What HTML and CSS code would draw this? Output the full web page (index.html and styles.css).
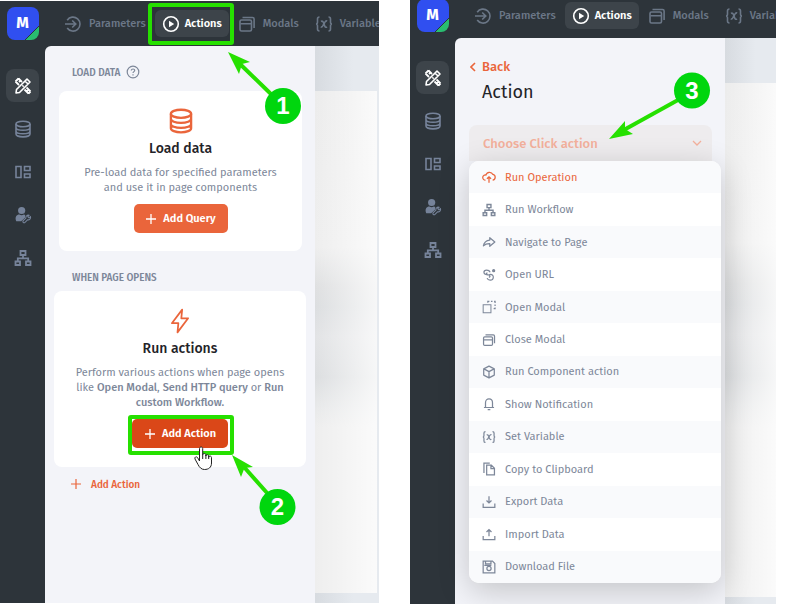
FILE: index.html
```html
<!DOCTYPE html>
<html lang="en">
<head>
<meta charset="utf-8">
<title>Page actions</title>
<link rel="stylesheet" href="styles.css">
</head>
<body>
<svg class="sprite" aria-hidden="true">
  <symbol id="enter" viewBox="0 0 18 18"><path d="M3.2 5.2A7 7 0 1 1 3.2 13M1 9h10.5M8.2 5.5 11.8 9l-3.6 3.5"/></symbol>
  <symbol id="play" viewBox="0 0 18 18"><circle cx="9" cy="9" r="7.3"/><path d="M7 5.8v6.4L12.2 9z" fill="currentColor" stroke="none"/></symbol>
  <symbol id="modals" viewBox="0 0 18 18"><rect x="2" y="5" width="11.5" height="11" rx="1.5"/><path d="M2.5 8.8h11M4.5 2.5h10a1.6 1.6 0 0 1 1.6 1.6v9"/></symbol>
  <symbol id="var" viewBox="0 0 18 18"><path d="M4.5 2Q2.5 2 2.5 4v3Q2.5 9 1 9q1.500 0 1.500 2v3q0 2 2 2M13.500 2q2 0 2 2v3q0 2 1.500 2-1.500 0-1.500 2v3q0 2-2 2M6 6.500q1.500-1 2.300.8l1.500 3.800q.7 1.800 2.200.7M12.200 6q-1.500-.5-2.500 1.500L8 10.500Q7 12.500 5.800 11.800"/></symbol>
  <symbol id="tools" viewBox="0 0 18 18"><g stroke-linejoin="round"><path d="M13 2 16 5 5.500 15.500 2 16l.5-3.500zM11 4l3 3"/><path d="M4.500 1.500 8 5M1.500 4.500 5 8M4.500 1.500l-3 3M10.500 12.500l4 4M12.500 10.500l4 4M14.500 16.500l2-2M6.500 3.500 5 5M14.500 12.500 13 14M8.500 9.500l1-1" stroke-width="1.800"/></g></symbol>
  <symbol id="db" viewBox="0 0 18 18"><ellipse cx="9" cy="4" rx="7" ry="2.800"/><path d="M2 4v10c0 1.600 3.100 2.900 7 2.900s7-1.300 7-2.900V4M2 7.500c0 1.600 3.100 2.800 7 2.800s7-1.200 7-2.800M2 11c0 1.600 3.100 2.800 7 2.800s7-1.200 7-2.800"/></symbol>
  <symbol id="layout" viewBox="0 0 18 18"><path d="M2 3.500h5v11H2zM10.500 3.500H16v4h-5.500zM10.500 11H16v3.500h-5.500z"/></symbol>
  <symbol id="user" viewBox="0 0 20 20"><g fill="currentColor" stroke="none"><circle cx="8.500" cy="5" r="4"/><path d="M2.500 17c-2-4.500.5-7.500 3.500-7.500 1.500 1 3.500 1 5 0l1.500.5-.3 3-4.200 4z"/></g><path d="m10 16.500 3.200-3a2.700 2.700 0 0 1 3.500-3.200l-1.400 1.600 1.300 1.300 1.700-1.400a2.700 2.700 0 0 1-3.300 3.500l-3 3.200c-1.500.5-2.500-.5-2-2z" stroke-width="1.200"/></symbol>
  <symbol id="flow" viewBox="0 0 18 18"><path d="M6.500 2h5v4h-5zM1.500 12.500H6V16H1.500zM12 12.500h4.500V16H12zM9 6v3.300M3.800 12.500V9.300h10.400v3.200" stroke-width="1.800"/></symbol>
  <symbol id="bolt" viewBox="0 0 24 24"><path d="M14 1.500 4.500 14h6l-.8 8.500L19.500 9.500h-6.300z" stroke-linejoin="round"/></symbol>
  <symbol id="plus" viewBox="0 0 12 12"><path d="M6 1v10M1 6h10"/></symbol>
  <symbol id="cloud" viewBox="0 0 18 18"><path d="M4.500 13A3.300 3.300 0 1 1 5 6.500a4.800 4.800 0 0 1 9-.8 3.700 3.700 0 0 1-.3 7.300M9 16.500V9M6.300 11.300 9 8.700l2.700 2.600"/></symbol>
  <symbol id="share" viewBox="0 0 18 18"><path d="M10 3.500 16.500 9 10 14.500v-3.300C6.500 11 4 12 1.800 14c.7-4.200 3.200-7 8.200-7.500z" stroke-linejoin="round"/></symbol>
  <symbol id="link" viewBox="0 0 18 18"><path d="M10.500 5.500C9 1.800 2.500 2 2.500 5.500c0 3.500 4 3 6 3.300 2 .2 2.500 2.700.3 3M7 6.200c-1.800.3-1.500 2 0 2.400M9.500 8.500c3-.8 5.500.8 5 4-.6 4-6.500 4.300-8 .5"/><circle cx="15" cy="3.500" r="1.300" fill="currentColor"/></symbol>
  <symbol id="open" viewBox="0 0 18 18"><path d="M1.500 6h10v10.500h-10z" stroke-width="1.300"/><path d="M7.500 3.500V1.700h2m2 0h2m2 0h1.300v2m0 2v2m0 2v1.300h-1.800"/></symbol>
  <symbol id="cube" viewBox="0 0 18 18"><path d="M9 1.500 15.800 5v8L9 16.500 2.200 13V5zM2.500 5 9 8.500 15.500 5M9 8.500v8" stroke-linejoin="round"/></symbol>
  <symbol id="bell" viewBox="0 0 18 18"><path d="M2.500 13.500h13M4.500 13V7.500C4.500 4.500 6.500 2.500 9 2.500s4.500 2 4.500 5V13M7.300 16.200h3.400"/></symbol>
  <symbol id="copy" viewBox="0 0 18 18"><path d="M6 4h6l4 4v8.500H6zM11.500 4v4.500H16M2.500 14V1.500H10"/></symbol>
  <symbol id="down" viewBox="0 0 18 18"><path d="M1.500 11v4.800h15V11M9 1.500V10M5.800 7 9 10.200 12.200 7"/></symbol>
  <symbol id="up" viewBox="0 0 18 18"><path d="M1.500 11.500v4.800h15v-4.800M9 12V3.500M5.800 6.500 9 3.300l3.200 3.200"/></symbol>
  <symbol id="disk" viewBox="0 0 18 18"><path d="M1.500 1.500h12l3 3v12h-15zM4.500 2v3h7V2M3 7h9"/><circle cx="9" cy="11" r="2.700"/></symbol>
</svg>

<main class="board">
  <section class="screen screen-first">
    <aside class="rail">
      <div class="logo">M</div>
      <button class="tool active" aria-label="Builder"><svg><use href="#tools"/></svg></button>
      <button class="tool" aria-label="Data"><svg><use href="#db"/></svg></button>
      <button class="tool" aria-label="Layouts"><svg><use href="#layout"/></svg></button>
      <button class="tool" aria-label="Users"><svg><use href="#user"/></svg></button>
      <button class="tool" aria-label="Workflows"><svg><use href="#flow"/></svg></button>
    </aside>
    <div class="content">
      <nav class="tabs">
        <button class="tab"><svg><use href="#enter"/></svg>Parameters</button>
        <button class="tab active"><svg><use href="#play"/></svg>Actions</button>
        <button class="tab"><svg><use href="#modals"/></svg>Modals</button>
        <button class="tab"><svg><use href="#var"/></svg>Variables</button>
      </nav>
      <div class="work">
        <div class="panel sections">
          <h2 class="label">LOAD DATA <svg class="help" viewBox="0 0 14 14"><circle cx="7" cy="7" r="5.800"/><path d="M5.300 5.600C5.300 3.400 8.800 3.500 8.700 5.500 8.700 6.600 7 6.700 7 8M7 9.300v1.100"/></svg></h2>
          <article class="card">
            <svg class="hero"><use href="#db"/></svg>
            <h3>Load data</h3>
            <p>Pre-load data for specified parameters<br>and use it in page components</p>
            <button class="primary"><svg><use href="#plus"/></svg>Add Query</button>
          </article>
          <h2 class="label">WHEN PAGE OPENS</h2>
          <article class="card wide">
            <svg class="hero"><use href="#bolt"/></svg>
            <h3>Run actions</h3>
            <p>Perform various actions when page opens<br>like <b>Open Modal</b>, <b>Send HTTP query</b> or <b>Run<br>custom Workflow.</b></p>
            <button class="primary pressed"><svg><use href="#plus"/></svg>Add Action</button>
          </article>
          <button class="add"><svg><use href="#plus"/></svg>Add Action</button>
        </div>
        <div class="canvas"><div class="sheet"></div></div>
      </div>
    </div>
    <svg class="marks" viewBox="0 0 379 602" width="379" height="602">
      <g class="frame"><rect x="150" y="4" width="82" height="38" rx="1"/><rect x="130" y="416" width="102" height="36" rx="1"/></g>
      <path class="shaft" d="M272 94 240 63M268 493 244 466"/>
      <path class="head" d="M228 51 250 61 242 63 239 73zM232 454 253 466 244.500 467 241 476z"/>
      <circle cx="283" cy="105" r="18"/><text x="283" y="113">1</text>
      <circle cx="277.500" cy="506" r="18"/><text x="277.500" y="514">2</text>
      <path class="hand" d="M199.500 460v-12.500c0-2 3.200-2 3.200 0v6.500c0-2 3.200-2 3.200 0v1c0-1.800 2.800-1.800 2.800.2v1c0-1.600 2.800-1.600 2.800.4v5.400c0 4.500-3 6.500-7 6.500-3 0-5-2-6.500-5l-3-5.500c-.8-2 1.500-2.800 2.500-1.500z"/>
      <path class="fingers" d="M202.700 454v4M205.900 454v4M208.700 455v3"/>
    </svg>
  </section>

  <section class="screen screen-second">
    <aside class="rail">
      <div class="logo">M</div>
      <button class="tool active" aria-label="Builder"><svg><use href="#tools"/></svg></button>
      <button class="tool" aria-label="Data"><svg><use href="#db"/></svg></button>
      <button class="tool" aria-label="Layouts"><svg><use href="#layout"/></svg></button>
      <button class="tool" aria-label="Users"><svg><use href="#user"/></svg></button>
      <button class="tool" aria-label="Workflows"><svg><use href="#flow"/></svg></button>
    </aside>
    <div class="content">
      <nav class="tabs">
        <button class="tab"><svg><use href="#enter"/></svg>Parameters</button>
        <button class="tab active"><svg><use href="#play"/></svg>Actions</button>
        <button class="tab"><svg><use href="#modals"/></svg>Modals</button>
        <button class="tab"><svg><use href="#var"/></svg>Variables</button>
      </nav>
      <div class="work">
        <div class="panel action">
          <a class="back" href="#"><svg viewBox="0 0 6 10"><path d="M5 1 1 5l4 4"/></svg>Back</a>
          <h1>Action</h1>
          <div class="picker">
            <select aria-label="Click action"><option>Choose Click action</option></select>
            <svg class="caret" viewBox="0 0 10 6"><path d="m1 1 4 4 4-4"/></svg>
            <div class="menu">
              <button class="current"><svg><use href="#cloud"/></svg>Run Operation</button>
              <button><svg><use href="#flow"/></svg>Run Workflow</button>
              <button><svg><use href="#share"/></svg>Navigate to Page</button>
              <button><svg><use href="#link"/></svg>Open URL</button>
              <button><svg><use href="#open"/></svg>Open Modal</button>
              <button><svg><use href="#modals"/></svg>Close Modal</button>
              <button><svg><use href="#cube"/></svg>Run Component action</button>
              <button><svg><use href="#bell"/></svg>Show Notification</button>
              <button><svg><use href="#var"/></svg>Set Variable</button>
              <button><svg><use href="#copy"/></svg>Copy to Clipboard</button>
              <button><svg><use href="#down"/></svg>Export Data</button>
              <button><svg><use href="#up"/></svg>Import Data</button>
              <button><svg><use href="#disk"/></svg>Download File</button>
            </div>
          </div>
        </div>
        <div class="canvas"><div class="sheet"></div></div>
      </div>
    </div>
    <svg class="marks" viewBox="0 0 366 604" width="366" height="604">
      <path class="shaft" d="M268 100 212 131"/>
      <path class="head" d="M199 139 215 121 215 129 223 134z"/>
      <circle cx="282" cy="90.500" r="18"/><text x="282" y="99">3</text>
    </svg>
  </section>
</main>
</body>
</html>
```
FILE: styles.css
```css
* { box-sizing: border-box; }
body {
  margin: 0;
  background: #fff;
  font: 11px/15px "Fira Sans", Roboto, "Noto Sans", sans-serif;
  color: #7d8799;
}
button, select { font: inherit; color: inherit; border: 0; background: none; padding: 0; margin: 0; }
h1, h2, h3, p { margin: 0; }
svg { fill: none; stroke: currentColor; stroke-width: 1.6; flex: none; }
.sprite { position: absolute; width: 0; height: 0; }

.board { display: grid; grid-template-columns: 379fr 366fr; gap: 31px; padding-right: 9px; align-items: start; }
.screen { position: relative; display: flex; overflow: hidden; background: #2d343a; min-width: 0; }
.screen-first { margin-top: 1px; }
.content { flex: 1; min-width: 0; display: flex; flex-direction: column; }
.screen-second .rail, .screen-second .content { margin-top: -7px; }

.rail { width: 45px; flex: none; display: flex; flex-direction: column; align-items: center; padding-top: 6px; }
.logo {
  width: 32px; height: 33px; margin-bottom: 29px; border-radius: 8px;
  background: linear-gradient(135deg, #304ff0 77%, #2d343a 77%, #2d343a 79%, #29bd70 79%);
  color: #fff; font-size: 16px; font-weight: 700; line-height: 32px; text-align: center;
}
.tool { width: 33px; height: 33px; margin-bottom: 10px; display: grid; place-items: center; color: #76839a; }
.tool svg { width: 18px; height: 18px; }
.tool.active { background: #3d444a; border-radius: 8px; color: #fff; }

.tabs { height: 45px; flex: none; display: flex; align-items: center; padding-left: 11px; overflow: hidden; }
.tab { height: 27px; flex: none; display: flex; align-items: center; gap: 7px; padding: 0 8px; color: #6b7787; font-weight: 500; }
.tab svg { width: 18px; height: 18px; }
.tab.active { background: #3d444a; color: #fff; border-radius: 6px; gap: 5px; padding: 0 7px; margin: 0 1px; font-weight: 600; }

.work { flex: 1; display: flex; }
.panel { width: 270px; flex: none; background: #f3f4f9; border-top-left-radius: 6px; position: relative; z-index: 1; }
.sections { height: 557px; padding: 18px 9px; }
.label { display: flex; align-items: center; gap: 6px; height: 16px; padding-left: 18px; font: 500 11px/15px "Fira Sans Condensed", "Fira Sans", Roboto, sans-serif; }
.help { width: 14px; height: 14px; stroke-width: 1.200; }
.card {
  display: flex; flex-direction: column; align-items: center; text-align: center;
  height: 160px; margin: 11px 4px 18px 5px; padding-top: 17px; border-radius: 8px; background: #fff;
}
.card.wide { height: 176px; margin: 6px 0 9px; }
.hero { width: 26px; height: 26px; margin-bottom: 6px; color: #ea653b; }
.card h3 { color: #1f2328; font-size: 14px; line-height: 18px; font-weight: 500; margin-bottom: 7px; }
.card b { font-weight: 500; }
.primary {
  width: 94px; height: 29px; margin-top: 9px; display: flex; align-items: center; justify-content: center; gap: 6px;
  border-radius: 5px; background: #ea653b; color: #fff; font-weight: 600;
}
.primary svg { width: 12px; height: 12px; stroke-width: 1.300; }
.primary.pressed { width: 96px; background: #da4718; }
.add { display: flex; align-items: center; gap: 9px; padding-left: 16px; height: 16px; color: #ea653b; font: 500 11px/15px "Fira Sans Condensed", "Fira Sans", Roboto, sans-serif; }
.add svg { width: 12px; height: 12px; stroke-width: 1.200; }

.canvas { flex: 1; min-width: 0; padding: 45px 2px 10px 0; background: linear-gradient(90deg, #d7dbe0, #e6eaef 60%); }
.sheet {
  height: 100%;
  background:
    linear-gradient(90deg, #fff0 0, #ffffffc0 100%),
    linear-gradient(#ececec 0, #eee 31%, #dfe0e1 39%, #dcdee0 43%, #e2e3e5 49%, #dcdee0 57%, #e8e9ea 63%, #eee 67%, #eee 100%);
}
.screen-second .canvas { padding-right: 0; padding-bottom: 7px; }

.action { height: 566px; padding: 20px 13px 0 14px; }
.back { display: flex; align-items: center; gap: 6px; padding-left: 1px; height: 17px; color: #ea653b; font-size: 13px; font-weight: 500; text-decoration: none; }
.back svg { width: 6px; height: 10px; }
.action h1 { padding-left: 13px; margin: 6px 0 21px; color: #1f2328; font-size: 18px; line-height: 23px; font-weight: 400; }
.picker { position: relative; }
.picker select { appearance: none; display: block; width: 100%; height: 36px; padding-left: 14px; border-radius: 8px 8px 0 0; background: #eeecee; color: #f3b09c; font-size: 13px; font-weight: 500; }
.caret { position: absolute; right: 10px; top: 15px; width: 10px; height: 6px; stroke-width: 1.300; color: #f3b09c; }
.menu {
  position: absolute; top: 36px; left: 0; right: -9px; height: 422px;
  display: grid; grid-auto-rows: 1fr; overflow: hidden; border-radius: 10px; background: #fff;
  box-shadow: 0 8px 32px #0003;
}
.menu button { display: flex; align-items: center; gap: 9px; padding-left: 13px; text-align: left; }
.menu button:nth-child(odd) { background: #f9fafc; }
.menu svg { width: 14px; height: 14px; }
.menu .current { color: #ea653b; }

.marks { position: absolute; left: 0; top: 0; z-index: 2; stroke: none; pointer-events: none; }
.frame { stroke: #26e000; stroke-width: 4; }
.shaft { stroke: #26e000; stroke-width: 4; }
.head { fill: #26e000; }
.marks circle { fill: #00d60e; }
.marks text { fill: #fff; font: 700 24px "Liberation Sans", sans-serif; text-anchor: middle; }
.hand { fill: #fff; stroke: #222; stroke-width: 1; }
.fingers { stroke: #222; stroke-width: 1; }
```
